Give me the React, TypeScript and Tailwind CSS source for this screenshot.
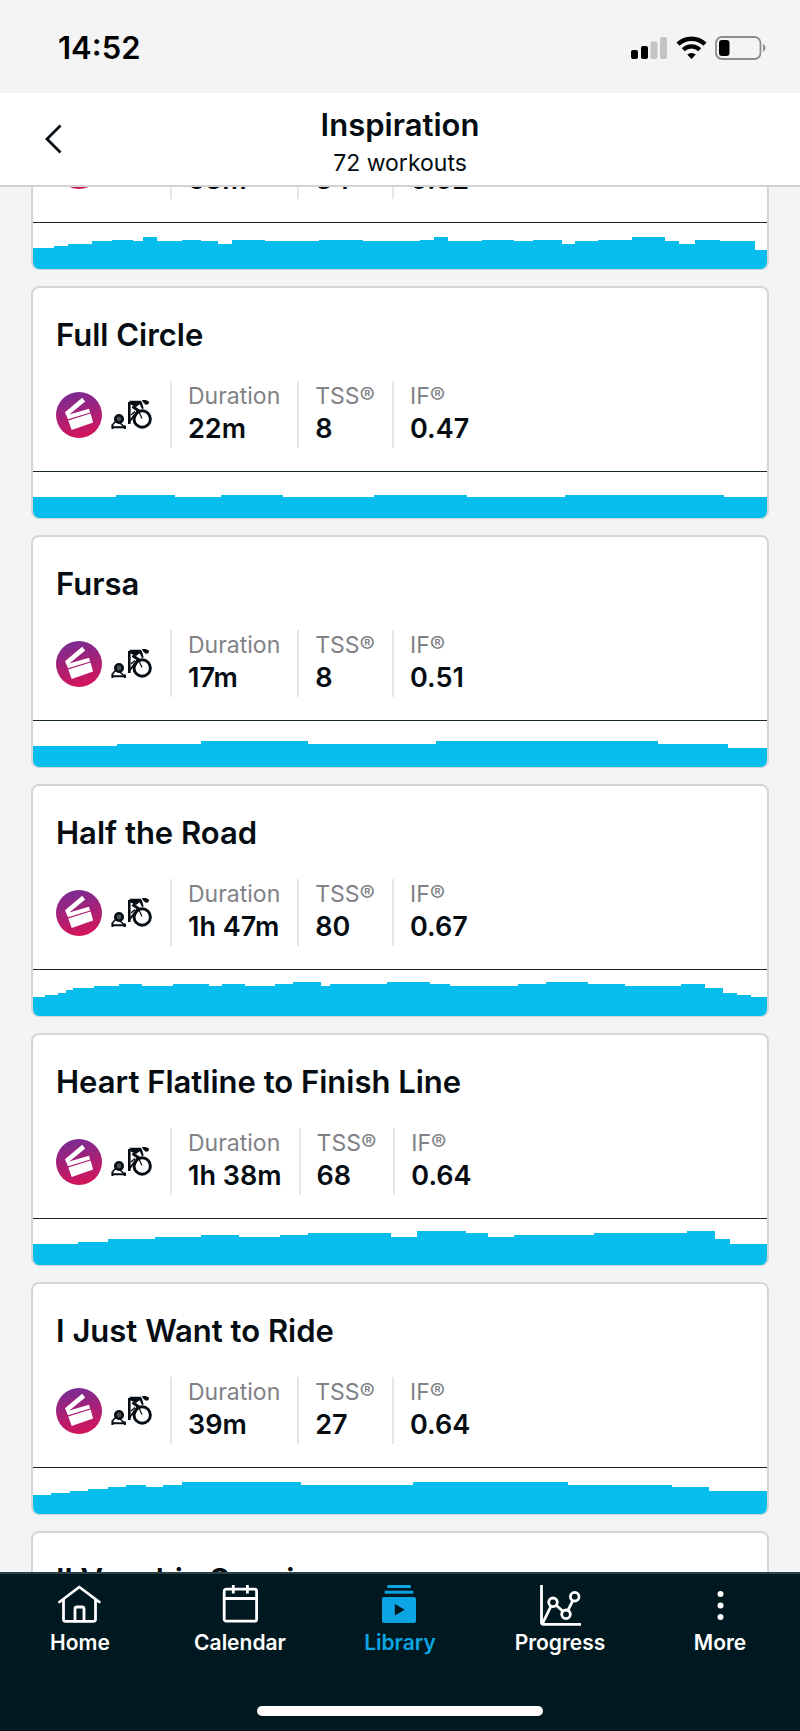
import React, { useLayoutEffect, useRef } from 'react';

type Step = [start: number, height: number];

interface Workout {
    id: number;
    name?: string;
    duration?: string;
    tss?: string;
    intensity?: string;
    profile?: Step[];
}

const CHART_WIDTH = 734;
const CHART_HEIGHT = 46;

const workouts: Workout[] = [
    {
        id: 1,
        duration: '53m',
        tss: '34',
        intensity: '0.62',
        profile: [
            [0, 21], [21, 23], [35, 25], [59, 28], [79, 29], [100, 28], [110, 32], [124, 28], [149, 29], [168, 28],
            [185, 25], [199, 29], [232, 28], [286, 29], [330, 28], [387, 29], [401, 32], [415, 28], [449, 29],
            [481, 28], [500, 29], [529, 25], [542, 28], [565, 29], [599, 32], [632, 28], [646, 25], [662, 29],
            [687, 28], [722, 19],
        ],
    },
    {
        id: 2,
        name: 'Full Circle',
        duration: '22m',
        tss: '8',
        intensity: '0.47',
        profile: [[0, 21], [83, 23], [142, 21], [188, 23], [250, 21], [341, 23], [434, 21], [532, 23], [691, 21]],
    },
    {
        id: 3,
        name: 'Fursa',
        duration: '17m',
        tss: '8',
        intensity: '0.51',
        profile: [[0, 21], [84, 23], [168, 26], [275, 23], [403, 26], [625, 23], [695, 19]],
    },
    {
        id: 4,
        name: 'Half the Road',
        duration: '1h 47m',
        tss: '80',
        intensity: '0.67',
        profile: [
            [0, 19], [12, 21], [25, 23], [33, 26], [40, 28], [61, 30], [86, 32], [109, 30], [140, 32], [176, 30],
            [189, 32], [212, 30], [242, 32], [260, 34], [288, 30], [297, 32], [354, 34], [397, 32], [417, 30],
            [485, 32], [513, 34], [555, 32], [592, 30], [648, 32], [672, 28], [690, 23], [704, 21], [718, 19],
        ],
    },
    {
        id: 5,
        name: 'Heart Flatline to Finish Line',
        duration: '1h 38m',
        tss: '68',
        intensity: '0.64',
        profile: [
            [0, 21], [45, 23], [75, 26], [122, 28], [168, 30], [206, 28], [247, 30], [275, 32], [358, 28], [384, 34],
            [433, 32], [455, 28], [481, 30], [561, 32], [654, 34], [682, 26], [697, 21],
        ],
    },
    {
        id: 6,
        name: 'I Just Want to Ride',
        duration: '39m',
        tss: '27',
        intensity: '0.64',
        profile: [
            [0, 19], [18, 21], [37, 23], [55, 25], [75, 27], [93, 29], [113, 27], [130, 29], [149, 32], [268, 29],
            [380, 32], [535, 29], [639, 27], [676, 23],
        ],
    },
    { id: 7, name: 'Il Vecchio Saggio' },
];

const profilePath = (steps: Step[]) =>
    `M0 ${CHART_HEIGHT}` +
    steps.map(([x, h]) => `H${x}V${CHART_HEIGHT - h}`).join('') +
    `H${CHART_WIDTH}V${CHART_HEIGHT}Z`;

const StatusBar = () => (
    <div className="flex h-[93px] shrink-0 items-center justify-between pl-[58px] pr-[33px] pt-[3px]">
        <span className="text-[31px] leading-9 font-semibold text-black">14:52</span>
        <div className="flex items-center gap-2">
            <svg width="37" height="24" viewBox="0 0 37 24" aria-hidden="true">
                <rect x="0" y="14" width="7" height="9" rx="2" />
                <rect x="10" y="10" width="7" height="13" rx="2" />
                <rect x="19.5" y="5.5" width="7" height="17.5" rx="2" fill="#c4c4c4" />
                <rect x="29" y="1" width="7" height="22" rx="2" fill="#c4c4c4" />
            </svg>
            <svg width="31" height="24" viewBox="0 0 31 24" aria-hidden="true">
                <path d="M2 8.2a19.4 19.4 0 0 1 27 0" fill="none" stroke="#000" strokeWidth="4.4" />
                <path d="M7.3 13.7a11.8 11.8 0 0 1 16.4 0" fill="none" stroke="#000" strokeWidth="4.2" />
                <path d="M11.2 18.6a6.4 6.4 0 0 1 8.6 0L15.5 23z" />
            </svg>
            <svg width="52" height="24" viewBox="0 0 52 24" aria-hidden="true">
                <rect x="1" y="1" width="44.5" height="22" rx="6" fill="none" stroke="#8e8e8e" strokeWidth="1.8" />
                <rect x="4" y="4" width="10.5" height="16" rx="3" />
                <path d="M48 8a4.4 4.4 0 0 1 0 8z" fill="#8e8e8e" />
            </svg>
        </div>
    </div>
);

const Header = () => (
    <header className="grid h-[94px] shrink-0 grid-cols-[1fr_auto_1fr] items-center border-b-2 border-[#d2d2d2] bg-white">
        <button type="button" aria-label="Back" className="ml-[30px] flex w-12 justify-center">
            <svg width="20" height="30" viewBox="0 0 20 30" fill="none" stroke="currentColor" strokeWidth="2.8">
                <path d="M16.5 1.5 3 15l13.5 13.5" />
            </svg>
        </button>
        <div className="flex flex-col gap-0.5 pt-1.5 text-center">
            <h1 className="text-[31px] leading-10 font-semibold">Inspiration</h1>
            <p className="text-[23px] leading-8">72 workouts</p>
        </div>
    </header>
);

const ClapperIcon = () => (
    <svg width="46" height="46" viewBox="0 0 46 46" aria-hidden="true" className="shrink-0">
        <defs>
            <linearGradient id="clapper" x1="0.4" y1="0" x2="0.6" y2="1">
                <stop offset="0" stopColor="#792c93" />
                <stop offset="0.55" stopColor="#ad1f73" />
                <stop offset="1" stopColor="#d5145a" />
            </linearGradient>
        </defs>
        <circle cx="23" cy="23" r="23" fill="url(#clapper)" />
        <g fill="#fff">
            <path d="M9 20.3 26.2 5.8l3 3.700L15.500 20.800l-2.300 1.800L33 16.700l1.100 3.700L12 27.200z" />
            <path d="M12.300 28.400 34.600 21.600l2.500 9L15.700 38z" />
        </g>
    </svg>
);

const TrainerIcon = () => (
    <svg width="42" height="31" viewBox="0 0 42 31" fill="none" stroke="#050d12" aria-hidden="true" className="shrink-0">
        <circle cx="31.2" cy="20" r="8.2" strokeWidth="2.9" />
        <circle cx="8" cy="20" r="3.700" fill="#4b5256" strokeWidth="2.600" />
        <path d="M1.500 25.800 5 22M9 24l4.500 4" strokeWidth="1.600" />
        <path d="M.5 28.200h14.500M1.400 25.500v4.500M13.800 26.500v3.500" strokeWidth="2" />
        <path d="M18.300 3v22" strokeWidth="2.600" />
        <path d="M18.500 22.500 23.500 16" strokeWidth="2" />
        <path d="M18.500 1.800h11.200l1.300 1.600 1.700 6-1.700.7-2.300-4.900-3.700 2.700-5.800-2.600z" fill="#050d12" stroke="none" />
        <path d="M21.500 7.500 27.300 11.500 22.500 19.500" strokeWidth="2.800" />
        <path d="M24 12.500 20 16" strokeWidth="1.400" />
        <path d="M27.500 12 31 19.500" strokeWidth="1.200" />
        <path d="M30.800 1.300c2.500-.7 5.200-.3 7.400 1.700l-.8 2.300-2.800.5-2.300-2.200z" fill="#050d12" stroke="none" />
    </svg>
);

const Stat = ({ label, value }: { label: string; value: string }) => (
    <div className="flex h-[67px] flex-col border-l-2 border-[#e6e6e6] pl-4 pr-[17px]">
        <dt className="text-[23px] leading-[30px] text-[#808285]">{label}</dt>
        <dd className="text-[27px] leading-9 font-semibold">{value}</dd>
    </div>
);

const WorkoutCard: React.FC<{ workout: Workout }> = ({ workout }) => {
    const { name, duration, tss, intensity, profile } = workout;

    return (
        <li className="flex h-[233px] shrink-0 flex-col overflow-hidden rounded-lg border-2 border-b border-[#d4d5d6] bg-white">
            <h2 className="mt-[27px] h-10 px-[23px] text-[31px] leading-10 font-semibold">{name}</h2>
            {duration && tss && intensity && (
                <div className="mt-[26px] flex items-center px-[23px]">
                    <ClapperIcon />
                    <span className="mr-[17px] ml-[9px]">
                        <TrainerIcon />
                    </span>
                    <dl className="flex">
                        <Stat label="Duration" value={duration} />
                        <Stat label="TSS®" value={tss} />
                        <Stat label="IF®" value={intensity} />
                    </dl>
                </div>
            )}
            {profile && (
                <div className="mt-auto border-t border-[#16242c]">
                    <svg
                        viewBox={`0 0 ${CHART_WIDTH} ${CHART_HEIGHT}`}
                        preserveAspectRatio="none"
                        shapeRendering="crispEdges"
                        aria-hidden="true"
                        className="block h-[46px] w-full"
                    >
                        <path d={profilePath(profile)} fill="#05beed" />
                    </svg>
                </div>
            )}
        </li>
    );
};

const HomeIcon = () => (
    <svg width="44" height="44" viewBox="0 0 44 44" fill="none" stroke="currentColor" strokeWidth="2.8" strokeLinecap="round" strokeLinejoin="round">
        <path d="M1.5 19 21.3 4l20 15" />
        <path d="M5.5 17v19.3q0 2 2 2h28q2 0 2-2V17" />
        <path d="M17 38V26q0-2 2-2h5q2 0 2 2v12" />
    </svg>
);

const CalendarIcon = () => (
    <svg width="44" height="44" viewBox="0 0 44 44" fill="none" stroke="currentColor" strokeWidth="2.8">
        <rect x="6.2" y="6.2" width="32.4" height="32" rx="2" />
        <path d="M6 15.5h32.5M15.3 2v8.500M29.4 2v8.500" />
    </svg>
);

const LibraryIcon = () => (
    <svg width="44" height="44" viewBox="0 0 44 44" fill="currentColor">
        <rect x="9.3" y="2" width="23.5" height="3" />
        <rect x="6.7" y="7.7" width="28.6" height="3" />
        <path fillRule="evenodd" d="M6 14h30q2 0 2 2v22q0 2-2 2H6q-2 0-2-2V16q0-2 2-2zM16.8 21v11.4L26.8 26.7z" />
    </svg>
);

const ProgressIcon = () => (
    <svg width="44" height="44" viewBox="0 0 44 44" fill="none" stroke="currentColor" strokeWidth="2.8">
        <path d="M3.5 2v37.3q0 2 2 2H43" />
        <circle cx="15" cy="19.3" r="4.3" />
        <circle cx="28" cy="31.3" r="4.3" />
        <circle cx="36.7" cy="13.7" r="4.3" />
        <path d="M4.500 40.500 13 23.200M18.200 22.300l6.600 6M29.900 27.400l4.900-9.800" />
    </svg>
);

const MoreIcon = () => (
    <svg width="44" height="44" viewBox="0 0 44 44" fill="currentColor">
        <circle cx="22.5" cy="11" r="3" />
        <circle cx="22.5" cy="22.6" r="3" />
        <circle cx="22.5" cy="34" r="3" />
    </svg>
);

const tabs = [
    { label: 'Home', Icon: HomeIcon },
    { label: 'Calendar', Icon: CalendarIcon },
    { label: 'Library', Icon: LibraryIcon, active: true },
    { label: 'Progress', Icon: ProgressIcon },
    { label: 'More', Icon: MoreIcon },
];

const TabBar = () => (
    <nav className="flex h-[159px] shrink-0 flex-col items-center justify-between border-t-2 border-[#2b4148] bg-[#001820] pt-[9px] pb-[15px]">
        <div className="grid w-full grid-cols-5">
            {tabs.map(({ label, Icon, active }) => (
                <button
                    key={label}
                    type="button"
                    aria-current={active ? 'page' : undefined}
                    className={`flex flex-col items-center ${active ? 'text-[#0aa5e2]' : 'text-white'}`}
                >
                    <Icon />
                    <span className="text-[21px] leading-8 font-semibold">{label}</span>
                </button>
            ))}
        </div>
        <div className="h-[10px] w-[286px] rounded-full bg-white" />
    </nav>
);

export default function App() {
    const listRef = useRef<HTMLElement>(null);

    useLayoutEffect(() => {
        if (listRef.current) listRef.current.scrollTop = 150;
    }, []);

    return (
        <div className="flex h-screen flex-col bg-[#f4f4f4] font-['Inter',sans-serif] text-[#050d12]">
            <StatusBar />
            <Header />
            <main ref={listRef} className="min-h-0 flex-1 overflow-y-auto [scrollbar-width:none]">
                <ul className="flex flex-col gap-4 px-[31px] pb-4">
                    {workouts.map(workout => (
                        <WorkoutCard key={workout.id} workout={workout} />
                    ))}
                </ul>
            </main>
            <TabBar />
        </div>
    );
}
